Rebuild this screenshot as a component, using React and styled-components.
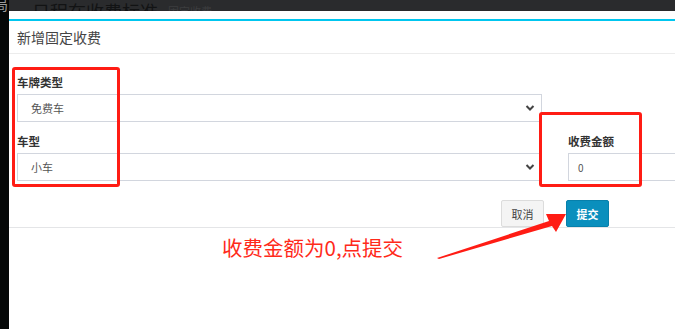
import React from 'react';
import styled, { createGlobalStyle } from 'styled-components';

const GlobalStyle = createGlobalStyle`
  html, body {
    margin: 0;
    padding: 0;
    background: #050808;
    overflow: hidden;
  }
  body {
    font-family: "Noto Sans CJK SC", "Noto Sans", sans-serif;
  }
  * {
    box-sizing: border-box;
  }
`;

const Page = styled.div`
  position: relative;
  width: 675px;
  height: 329px;
  display: flex;
  overflow: hidden;
  background: #050808;
`;

const SideStrip = styled.div`
  width: 9px;
  flex-shrink: 0;
  overflow: hidden;
  background: #050808;
`;

const SideGlyph = styled.div`
  margin-left: -6px;
  margin-top: -4px;
  font-size: 14px;
  line-height: 16px;
  color: #9a9c9e;
`;

const Main = styled.div`
  flex: 1;
  display: flex;
  flex-direction: column;
  min-width: 0;
`;

const TopBar = styled.div`
  height: 11px;
  flex-shrink: 0;
  overflow: hidden;
  background: #2a2b2d;
  padding-left: 23px;
  display: flex;
  align-items: flex-start;
  gap: 10px;
`;

const TopTitle = styled.span`
  font-size: 18px;
  line-height: 18px;
  margin-top: 2px;
  color: #121314;
  white-space: nowrap;
`;

const TopSub = styled.span`
  font-size: 11px;
  line-height: 11px;
  margin-top: 6px;
  color: #3c3d3f;
  white-space: nowrap;
`;

const Modal = styled.div`
  flex: 1;
  background: #ffffff;
  padding-top: 8px;
  overflow: hidden;
`;

const ModalInner = styled.div`
  border-top: 2px solid #00c6ef;
`;

const ModalHeader = styled.div`
  height: 33px;
  padding-left: 8px;
  display: flex;
  align-items: center;
  border-bottom: 1px solid #ececec;
`;

const ModalTitle = styled.h4`
  margin: 0;
  font-size: 14px;
  font-weight: 400;
  color: #444;
`;

const ModalBody = styled.div`
  padding: 20px 0 0 8px;
`;

const FormRow = styled.div`
  display: flex;
  align-items: flex-end;
  gap: 26px;
`;

const Column = styled.div`
  width: ${p => p.$width}px;
  flex-shrink: 0;
  display: flex;
  flex-direction: column;
  gap: 11px;
`;

const FormGroup = styled.div`
  display: flex;
  flex-direction: column;
`;

const Label = styled.label`
  display: block;
  font-size: 11.5px;
  line-height: 16px;
  font-weight: 700;
  color: #333;
  margin-bottom: 4px;
`;

const SelectBox = styled.div`
  position: relative;
  height: 28px;
  border: 1px solid #d2d6de;
  background: #fff;
  display: flex;
  align-items: center;
  padding: 0 13px;
  font-size: 11px;
  color: #555;
`;

const Chevron = styled.svg`
  position: absolute;
  right: 6px;
  top: 50%;
  margin-top: -4px;
`;

const TextInput = styled.div`
  height: 28px;
  border: 1px solid #d2d6de;
  background: #fff;
  display: flex;
  align-items: center;
  padding: 0 9px;
  font-size: 10px;
  color: #555;
`;

const ModalFooter = styled.div`
  margin-top: 19px;
  padding-right: 66px;
  display: flex;
  justify-content: flex-end;
  gap: 22px;
  border-bottom: 1px solid #e4e5e7;
`;

const Button = styled.button`
  height: 27px;
  width: ${p => p.$width}px;
  padding: 0;
  border-radius: 2px;
  font-family: inherit;
  font-size: 11px;
  font-weight: ${p => (p.$primary ? 700 : 400)};
  color: ${p => (p.$primary ? '#ffffff' : '#444')};
  background: ${p => (p.$primary ? '#0a8fbd' : '#f4f4f4')};
  border: 1px solid ${p => (p.$primary ? '#0780ab' : '#dcdcdc')};
`;

const HighlightBox = styled.div`
  position: absolute;
  left: ${p => p.$x}px;
  top: ${p => p.$y}px;
  width: ${p => p.$w}px;
  height: ${p => p.$h}px;
  border: 3px solid #ff1c14;
  border-radius: 3px;
  pointer-events: none;
`;

const Note = styled.div`
  position: absolute;
  left: 222px;
  top: 234px;
  font-size: 20.5px;
  line-height: 26px;
  color: #ff2a1a;
  white-space: nowrap;
`;

const ArrowLayer = styled.svg`
  position: absolute;
  left: 0;
  top: 0;
  pointer-events: none;
`;

const ChevronIcon = () => (
  <Chevron width="10" height="8" viewBox="0 0 10 8">
    <path d="M1.5 2 L5 5.5 L8.5 2" fill="none" stroke="#444" strokeWidth="2" />
  </Chevron>
);

export default function App() {
  return (
    <>
      <GlobalStyle />
      <Page>
        <SideStrip>
          <SideGlyph>局</SideGlyph>
        </SideStrip>
        <Main>
          <TopBar>
            <TopTitle>日程在收费标准</TopTitle>
            <TopSub>固定收费</TopSub>
          </TopBar>
          <Modal>
            <ModalInner>
              <ModalHeader>
                <ModalTitle>新增固定收费</ModalTitle>
              </ModalHeader>
              <ModalBody>
                <FormRow>
                  <Column $width={525}>
                    <FormGroup>
                      <Label>车牌类型</Label>
                      <SelectBox>
                        免费车
                        <ChevronIcon />
                      </SelectBox>
                    </FormGroup>
                    <FormGroup>
                      <Label>车型</Label>
                      <SelectBox>
                        小车
                        <ChevronIcon />
                      </SelectBox>
                    </FormGroup>
                  </Column>
                  <Column $width={160}>
                    <FormGroup>
                      <Label>收费金额</Label>
                      <TextInput>0</TextInput>
                    </FormGroup>
                  </Column>
                </FormRow>
              </ModalBody>
              <ModalFooter>
                <Button $width={43}>取消</Button>
                <Button $width={43} $primary>提交</Button>
              </ModalFooter>
            </ModalInner>
          </Modal>
        </Main>

        <HighlightBox $x={12} $y={67} $w={108} $h={120} />
        <HighlightBox $x={539} $y={112} $w={103} $h={75} />
        <Note>收费金额为0,点提交</Note>
        <ArrowLayer width="675" height="329" viewBox="0 0 675 329">
          <polygon
            points="437,258 549,221 546,214 566,214 556,232 552,226 439,259"
            fill="#ff1c14"
          />
        </ArrowLayer>
      </Page>
    </>
  );
}
